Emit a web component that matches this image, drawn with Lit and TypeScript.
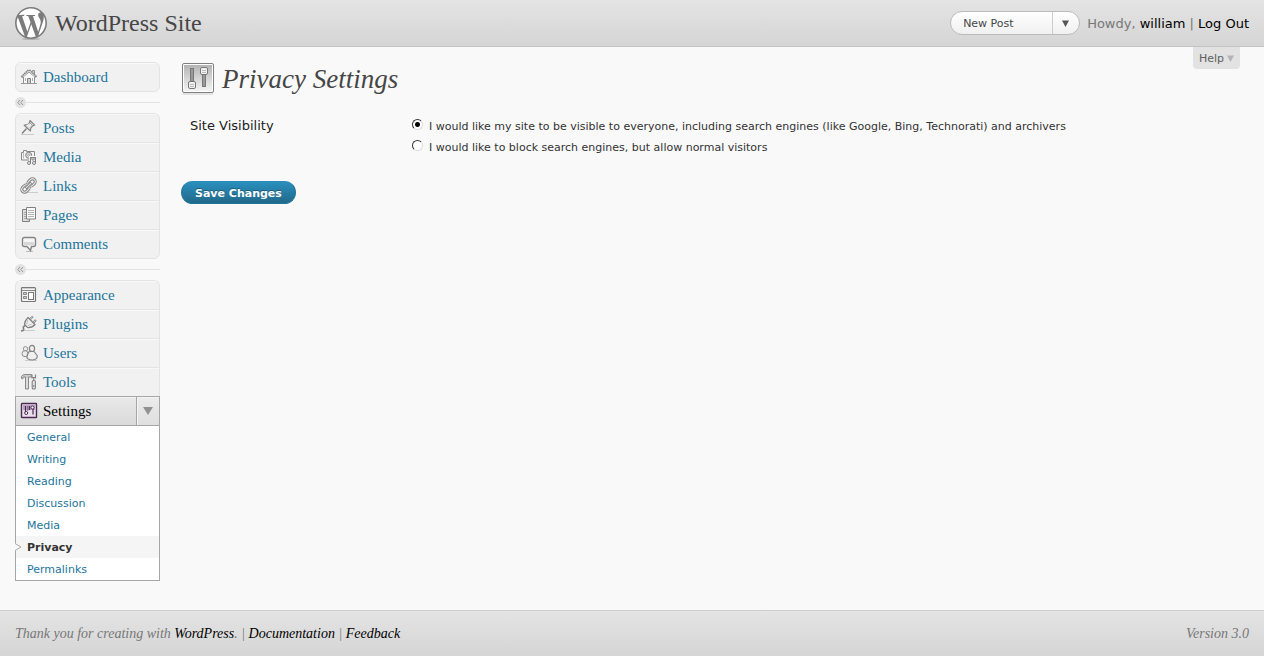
import { LitElement, html, svg, css } from "lit";
import { customElement, property, state } from "lit/decorators.js";

const icons: Record<string, unknown> = {
  dashboard: svg`
    <path d="M3.5 8.5v7h11v-7L9 4z" fill="#f8f8f8" stroke="#909090"/>
    <path d="M12.5 4V2.5h2V6" fill="#ddd" stroke="#909090"/>
    <path d="M1.5 9.2 9 2l7.5 7.2" fill="none" stroke="#858585" stroke-width="2.4" stroke-dasharray="1.6 .5"/>
    <path d="M3 8.6 9 3l6 5.6" fill="none" stroke="#eee" stroke-width=".8"/>
    <path d="M7.5 15.5v-5h3v5z" fill="#ccc" stroke="#858585"/>
    <path d="M5.5 10v3M12.5 10v3" stroke="#aaa"/>
    <path d="M1 15.5h16" stroke="#999"/>`,
  posts: svg`
    <path d="M1 15.5h13" stroke="#ccc"/>
    <path d="M6.5 9.500 2 14.500" stroke="#808080" stroke-width="1.4"/>
    <path d="M10 1.500 14.700 6.200 12.700 6.800 10.800 9 10.400 12 4.200 6.200 7.500 5.600 9.500 3.600z" fill="#ddd" stroke="#888" stroke-width="1.2" stroke-linejoin="round"/>
    <path d="M9 4.500 6.800 7.200M11 5 8.600 8" stroke="#fff"/>
    <path d="m10 4 3 3" stroke="#999"/>`,
  media: svg`
    <path d="M1.500 4.500h2v-2h3v1h8v8.500h-13z" fill="#f4f4f4" stroke="#888"/>
    <path d="M3.500 4.500v6" stroke="#bbb"/>
    <circle cx="8.700" cy="7.300" r="3" fill="#ddd" stroke="#808080"/>
    <circle cx="8.700" cy="7.300" r="1" fill="#fff" stroke="#888" stroke-width=".7"/>
    <path d="M10.500 15V9.500h5V15" fill="none" stroke="#fff" stroke-width="3"/>
    <path d="M10.500 15V9.500h5V15M10.500 11h5" fill="none" stroke="#808080" stroke-width="1.2"/>
    <circle cx="9" cy="15" r="1.500" fill="#eee" stroke="#808080"/>
    <circle cx="14" cy="15" r="1.500" fill="#eee" stroke="#808080"/>`,
  links: svg`
    <path d="M3 15.500h15" stroke="#ccc"/>
    <g fill="none" transform="rotate(-45 8.500 8.500)">
      <rect x="8.800" y="5.700" width="8" height="5.600" rx="2.800" stroke="#808080" stroke-width="3"/>
      <rect x="8.800" y="5.700" width="8" height="5.600" rx="2.800" stroke="#e8e8e8" stroke-width="1.100"/>
      <rect x=".2" y="5.700" width="8" height="5.600" rx="2.800" stroke="#808080" stroke-width="3"/>
      <rect x=".2" y="5.700" width="8" height="5.600" rx="2.800" stroke="#e8e8e8" stroke-width="1.100"/>
      <path d="M4.500 8.500h8" stroke="#808080" stroke-width="2.600"/>
      <path d="M5 8.500h7" stroke="#e8e8e8"/>
    </g>`,
  pages: svg`
    <path d="M2.500 3.500h7v12h-7z" fill="#ddd" stroke="#808080"/>
    <path d="M4 6.500h2M4 8.500h2M4 10.500h2M4 12.500h2" stroke="#aaa"/>
    <path d="M6.500 1.500h9v11.500h-9z" fill="#fafafa" stroke="#808080"/>
    <path d="M8 4.500h6M8 6.500h6M8 8.500h6M8 10.500h6" stroke="#b4b4b4"/>`,
  comments: svg`
    <path d="M6 16.500h7" stroke="#bbb"/>
    <path d="M4.500 2.500h9q2 0 2 2v5q0 2-2 2h-2L10.500 15.500 7 11.500H4.500q-2 0-2-2v-5q0-2 2-2z" fill="#f6f6f6" stroke="#858585" stroke-width="1.400"/>
    <path d="M4 7h10v2.500q0 .8-1 .8H5q-1 0-1-.8z" fill="#d8d8d8"/>`,
  appearance: svg`
    <rect x="1.500" y="1.500" width="14" height="14" rx="1" fill="#f4f4f4" stroke="#777" stroke-width="1.200"/>
    <path d="M2 4.500h13" stroke="#888"/>
    <path d="M2 2.500h13" stroke="#ccc"/>
    <rect x="8.500" y="6.500" width="5" height="7" fill="#fff" stroke="#777"/>
    <path d="M3.500 6.500h3v2h-3zM3.500 10.500h3v2h-3z" fill="#ccc" stroke="#888"/>`,
  plugins: svg`
    <path d="M3 15.500h12" stroke="#ccc"/>
    <path d="M5.500 10.500Q2.500 11.500 3.500 13.500T1 16" fill="none" stroke="#808080" stroke-width="1.600"/>
    <path d="M9.500 4.500 13 1.500M12.700 8 16 5" stroke="#808080" stroke-width="2.200"/>
    <path d="M10 4 12.700 1.800M13.200 7.500 15.500 5.400" stroke="#eee" stroke-width=".8"/>
    <path d="M8 2.500 15 9.500Q12 13 7.500 12.500L4.500 9.500Q4.500 6 8 2.500z" fill="#f0f0f0" stroke="#808080" stroke-width="1.200"/>
    <path d="M7.500 5 6.800 9.500M11.500 9 8 10.700" stroke="#bbb"/>`,
  users: svg`
    <path d="M5 16.500h12" stroke="#ccc"/>
    <circle cx="5.500" cy="4.800" r="2.200" fill="#eee" stroke="#909090"/>
    <ellipse cx="5" cy="9.700" rx="3" ry="3" fill="#ececec" stroke="#909090"/>
    <ellipse cx="12" cy="4.500" rx="2.600" ry="3.200" fill="#eee" stroke="#858585" stroke-width="1.200"/>
    <path d="M8 9.500Q8.500 7.300 10 7.300L14 7.500 17.200 11.500Q17.800 15.500 12.500 16 7 15.800 6.800 13z" fill="#f0f0f0" stroke="#858585" stroke-width="1.200" stroke-linejoin="round"/>`,
  tools: svg`
    <path d="M1.500 5.500V3.500Q2.500 1.500 5 1.500h6.500v2.500H8.500V16H5.500V4H3.500L2.500 6z" fill="#ccc" stroke="#808080" stroke-width=".9"/>
    <path d="M7 5v10" stroke="#f4f4f4" stroke-width=".8"/>
    <path d="M12 5.500V1.500M15.500 5.500V1.500M12 4.500h3.500M13.700 4v4" stroke="#858585" stroke-width="1.200"/>
    <rect x="12.200" y="7.500" width="3.200" height="8.500" rx="1.300" fill="#e4e4e4" stroke="#808080" stroke-width="1.100"/>
    <path d="M13.800 12v2" stroke="#808080"/>`,
  settings: svg`
    <rect x="1.500" y="1.500" width="15" height="14" rx=".5" fill="#eadfec" stroke="#4b2b50" stroke-width="1.400"/>
    <path d="M3 3h12v5H3z" fill="#bda3c2"/>
    <path d="M5.500 4v6M9.500 4v4M13 6v6.500" stroke="#4b2b50" stroke-width="1.200"/>
    <circle cx="6.200" cy="11" r="1.500" fill="#fff" stroke="#4b2b50"/>
    <path d="M7.800 4v5" stroke="#6c4b71" stroke-width=".8"/>
    <circle cx="12.500" cy="5.500" r="1.500" fill="#fff" stroke="#4b2b50"/>`,
};

@customElement("menu-icon")
export class MenuIcon extends LitElement {
  @property() name = "";

  static styles = css`
    :host { display: block; width: 18px; height: 18px; flex: none; }
    svg { display: block; }
  `;

  render() {
    return html`<svg width="18" height="18" viewBox="0 0 18 18" aria-hidden="true">${icons[this.name]}</svg>`;
  }
}

const contentMenu = ["Posts", "Media", "Links", "Pages", "Comments"];
const adminMenu = ["Appearance", "Plugins", "Users", "Tools"];
const settingsMenu = ["General", "Writing", "Reading", "Discussion", "Media", "Privacy", "Permalinks"];

@customElement("admin-menu")
export class AdminMenu extends LitElement {
  @state() open = true;

  static styles = css`
    :host { display: block; width: 145px; flex: none; font-family: Georgia, "Liberation Serif", serif; }
    ul { list-style: none; margin: 0; padding: 0; }
    a { text-decoration: none; color: #21759b; }
    .group { border: 1px solid #e3e3e3; border-radius: 6px; background: #f1f1f1; overflow: hidden; }
    .group li + li { border-top: 1px solid #e3e3e3; }
    .group.joined { border-bottom: 0; border-radius: 6px 6px 0 0; }
    .item {
      display: flex; align-items: center; gap: 5px; height: 28px; padding-left: 4px;
      box-sizing: border-box; font-size: 15px; line-height: 28px; box-shadow: inset 0 1px #f9f9f9;
    }
    .separator { display: flex; align-items: center; width: 100%; height: 21px; padding: 0; border: 0; background: none; cursor: pointer; }
    .separator svg { display: block; flex: none; }
    .rule { flex: 1; height: 1px; background: #e3e3e3; }
    .current {
      display: flex; height: 28px; border: 1px solid #a6a6a6;
      background: linear-gradient(#e9e9e9, #dadada);
    }
    .current .item { flex: 1; color: #000; box-shadow: inset 0 1px #f4f4f4; }
    .toggle {
      width: 23px; padding: 0; border: 0; border-left: 1px solid #a6a6a6; display: grid; place-items: center;
      background: linear-gradient(#ececec, #dfdfdf); box-shadow: inset 1px 1px #f4f4f4; cursor: pointer;
    }
    .sub { border: 1px solid #a6a6a6; border-top: 0; background: #fff; font-family: Verdana, "DejaVu Sans", sans-serif; font-size: 11px; }
    .sub li { position: relative; }
    .sub a { display: block; padding: 2px 0 0 11px; line-height: 20px; }
    .sub .active { background: #f5f5f5; color: #333; font-weight: bold; }
    .notch { position: absolute; left: -1px; top: 7px; }
  `;

  private item(label: string) {
    return html`<a class="item" href="#"><menu-icon name=${label.toLowerCase()}></menu-icon>${label}</a>`;
  }

  private separator() {
    return html`<button class="separator" aria-label="Collapse menu">
      <svg width="11" height="11" viewBox="0 0 11 11"><circle cx="5.500" cy="5.500" r="5.500" fill="#e2e2e2"/><path d="M5 3 2.800 5.500 5 8M8 3 5.800 5.500 8 8" fill="none" stroke="#999"/></svg>
      <span class="rule"></span>
    </button>`;
  }

  render() {
    return html`<nav aria-label="Main menu">
      <ul class="group"><li>${this.item("Dashboard")}</li></ul>
      ${this.separator()}
      <ul class="group">${contentMenu.map((m) => html`<li>${this.item(m)}</li>`)}</ul>
      ${this.separator()}
      <ul class="group joined">${adminMenu.map((m) => html`<li>${this.item(m)}</li>`)}</ul>
      <div class="current">
        ${this.item("Settings")}
        <button class="toggle" aria-label="Toggle settings menu" aria-expanded=${this.open} @click=${() => (this.open = !this.open)}>
          <svg width="10" height="8" viewBox="0 0 10 8"><path d="M0 0h10L5 8z" fill="#919191"/></svg>
        </button>
      </div>
      ${this.open
        ? html`<ul class="sub">
            ${settingsMenu.map((m) =>
              m === "Privacy"
                ? html`<li>
                    <a class="active" href="#" aria-current="page">${m}</a>
                    <svg class="notch" width="7" height="8" viewBox="0 0 7 8"><path d="M0 0 6 4 0 8z" fill="#f9f9f9"/><path d="M0 .5 6 4 0 7.500" fill="none" stroke="#aaa"/></svg>
                  </li>`
                : html`<li><a href="#">${m}</a></li>`
            )}
          </ul>`
        : null}
    </nav>`;
  }
}

@customElement("app-root")
export class AppRoot extends LitElement {
  static styles = css`
    :host {
      display: flex; flex-direction: column; min-height: 100vh; background: #f9f9f9; color: #333;
      font-family: Verdana, "DejaVu Sans", sans-serif; font-size: 11px;
    }
    a { color: #000; text-decoration: none; }
    h1, h2 { margin: 0; font-family: Georgia, "Liberation Serif", serif; font-weight: normal; color: #464646; }
    .header {
      display: flex; align-items: center; height: 46px; padding: 0 15px;
      background: linear-gradient(#e4e4e4, #d5d5d5); border-bottom: 1px solid #c3c3c3;
    }
    .logo { display: block; flex: none; }
    h1 { flex: 1; margin-left: 8px; font-size: 24px; line-height: 32px; }
    h1 a { color: #464646; }
    .actions {
      display: flex; height: 22px; width: 128px; border: 1px solid #bbb; border-radius: 12px;
      overflow: hidden; background: linear-gradient(#fff, #f0f0f0);
    }
    .actions button { border: 0; padding: 0; background: none; font: inherit; color: #464646; cursor: pointer; }
    .actions .new { flex: 1; padding-left: 12px; text-align: left; }
    .actions .more { width: 27px; border-left: 1px solid #ccc; display: grid; place-items: center; padding-right: 2px; }
    .user { margin-left: 7px; font-size: 13px; line-height: 20px; padding-top: 1px; color: #777; }
    .body { display: flex; flex: 1; align-items: flex-start; padding: 15px 15px 29px; }
    .main { flex: 1; min-width: 0; padding-left: 21px; }
    .top { display: flex; align-items: flex-start; }
    .screen { display: flex; flex: 1; align-items: center; gap: 7px; }
    .screen svg { display: block; }
    h2 { padding-top: 2px; font-size: 27px; line-height: 31px; font-style: italic; }
    .help {
      display: flex; align-items: center; gap: 3px; height: 22px; margin: -15px 9px 0 0; padding: 0 6px;
      border: 0; border-radius: 0 0 4px 4px; background: #e2e2e2; color: #606060; font: inherit; cursor: pointer;
    }
    fieldset { display: flex; border: 0; margin: 0; padding: 21px 0 0 9px; }
    legend { float: left; width: 222px; padding: 0; font-size: 13px; line-height: 20px; color: #222; }
    .choices { display: grid; flex: 1; }
    .choice { display: flex; align-items: center; gap: 6px; line-height: 21px; }
    .choice input {
      appearance: none; flex: none; width: 11px; height: 11px; margin: 0 0 4px; border-radius: 50%;
      border: 1px solid; border-color: #333 #ddd #ddd #333; background: #fff;
    }
    .choice input:checked { background: radial-gradient(circle, #000 2px, #fff 3px); }
    .save {
      display: block; margin-top: 23px; height: 23px; padding: 1px 13px 0; border: 1px solid; border-color: #2a8ab8 #21759b #21759b;
      border-radius: 12px; background: linear-gradient(#2a8fbd, #21698a); color: #fff; cursor: pointer;
      font: bold 11px Verdana, "DejaVu Sans", sans-serif; text-shadow: 0 -1px rgba(0, 0, 0, 0.3);
    }
    .footer {
      display: flex; justify-content: space-between; border-top: 1px solid #cfcfcf; padding: 0 15px;
      background: linear-gradient(#e4e4e4, #d5d5d5);
      font: italic 14px/45px Georgia, "Liberation Serif", serif; color: #777;
    }
  `;

  render() {
    return html`
      <header class="header">
        <svg class="logo" width="32" height="32" viewBox="0 0 32 32" overflow="visible" aria-hidden="true">
          <ellipse cx="16" cy="32" rx="9" ry="1" fill="#b4b4b4"/>
          <circle cx="16" cy="16" r="15.500" fill="#fff"/>
          <g transform="scale(1.3333)"><path fill="#7b7b7b" d="M21.469 6.825c.84 1.537 1.318 3.3 1.318 5.175 0 3.979-2.156 7.456-5.363 9.325l3.295-9.527c.615-1.54.82-2.771.82-3.864 0-.405-.026-.78-.07-1.11m-7.981.105c.647-.03 1.232-.105 1.232-.105.582-.075.514-.93-.067-.899 0 0-1.755.135-2.88.135-1.064 0-2.85-.15-2.85-.15-.585-.03-.661.855-.075.885 0 0 .54.061 1.125.09l1.68 4.605-2.37 7.08L5.354 6.9c.649-.03 1.234-.1 1.234-.1.585-.075.516-.93-.065-.896 0 0-1.746.138-2.874.138-.2 0-.438-.008-.69-.015C4.911 3.15 8.235 1.215 12 1.215c2.809 0 5.365 1.072 7.286 2.833-.046-.003-.091-.009-.141-.009-1.06 0-1.812.923-1.812 1.914 0 .89.513 1.643 1.06 2.531.411.72.89 1.643.89 2.977 0 .915-.354 1.994-.821 3.479l-1.075 3.585-3.9-11.61.001.014zM12 22.784c-1.059 0-2.081-.153-3.048-.437l3.237-9.406 3.315 9.087c.024.053.05.101.078.149-1.12.393-2.325.609-3.582.609M1.211 12c0-1.564.336-3.05.935-4.39L7.29 21.709C3.694 19.96 1.212 16.271 1.211 12M12 0C5.385 0 0 5.385 0 12s5.385 12 12 12 12-5.385 12-12S18.615 0 12 0"/></g>
        </svg>
        <h1><a href="#">WordPress Site</a></h1>
        <div class="actions">
          <button class="new">New Post</button>
          <button class="more" aria-label="More actions"><svg width="7" height="7" viewBox="0 0 7 7"><path d="M0 .5h7L3.500 7z" fill="#555"/></svg></button>
        </div>
        <div class="user">Howdy, <a href="#">william</a> | <a href="#">Log Out</a></div>
      </header>
      <div class="body">
        <admin-menu></admin-menu>
        <main class="main">
          <div class="top">
            <div class="screen">
              <svg width="34" height="33" viewBox="0 0 34 33" aria-hidden="true">
                <defs><linearGradient id="tile" x1="0" y1="0" x2="0" y2="1"><stop offset="0" stop-color="#b4b4b4"/><stop offset="1" stop-color="#f4f4f4"/></linearGradient></defs>
                <path d="M2 32h30" stroke="#ccc"/>
                <rect x="1.500" y="1.500" width="31" height="29" rx="1.500" fill="#fff" stroke="#808080"/>
                <rect x="3" y="3" width="28" height="26" fill="url(#tile)"/>
                <rect x="9.500" y="6.500" width="3" height="14" fill="#999" stroke="#777"/>
                <rect x="7.500" y="19.500" width="7" height="7" rx="1.500" fill="#f2f2f2" stroke="#777"/>
                <path d="M9 22.500h4M9 24.500h4" stroke="#bbb"/>
                <rect x="21.500" y="12.500" width="3" height="12" fill="#999" stroke="#777"/>
                <rect x="19.500" y="5.500" width="7" height="7" rx="1.500" fill="#f2f2f2" stroke="#777"/>
                <path d="M21 8.500h4M21 10.500h4" stroke="#bbb"/>
              </svg>
              <h2>Privacy Settings</h2>
            </div>
            <button class="help">Help <svg width="7" height="7" viewBox="0 0 7 7"><path d="M0 .5h7L3.500 7z" fill="#b4b4b4"/></svg></button>
          </div>
          <form @submit=${(e: Event) => e.preventDefault()}>
            <fieldset>
              <legend>Site Visibility</legend>
              <div class="choices">
                <label class="choice"><input type="radio" name="visibility" value="1" checked />I would like my site to be visible to everyone, including search engines (like Google, Bing, Technorati) and archivers</label>
                <label class="choice"><input type="radio" name="visibility" value="0" />I would like to block search engines, but allow normal visitors</label>
              </div>
            </fieldset>
            <button class="save" type="submit">Save Changes</button>
          </form>
        </main>
      </div>
      <footer class="footer">
        <span>Thank you for creating with <a href="#">WordPress</a>. | <a href="#">Documentation</a> | <a href="#">Feedback</a></span>
        <span>Version 3.0</span>
      </footer>
    `;
  }
}
